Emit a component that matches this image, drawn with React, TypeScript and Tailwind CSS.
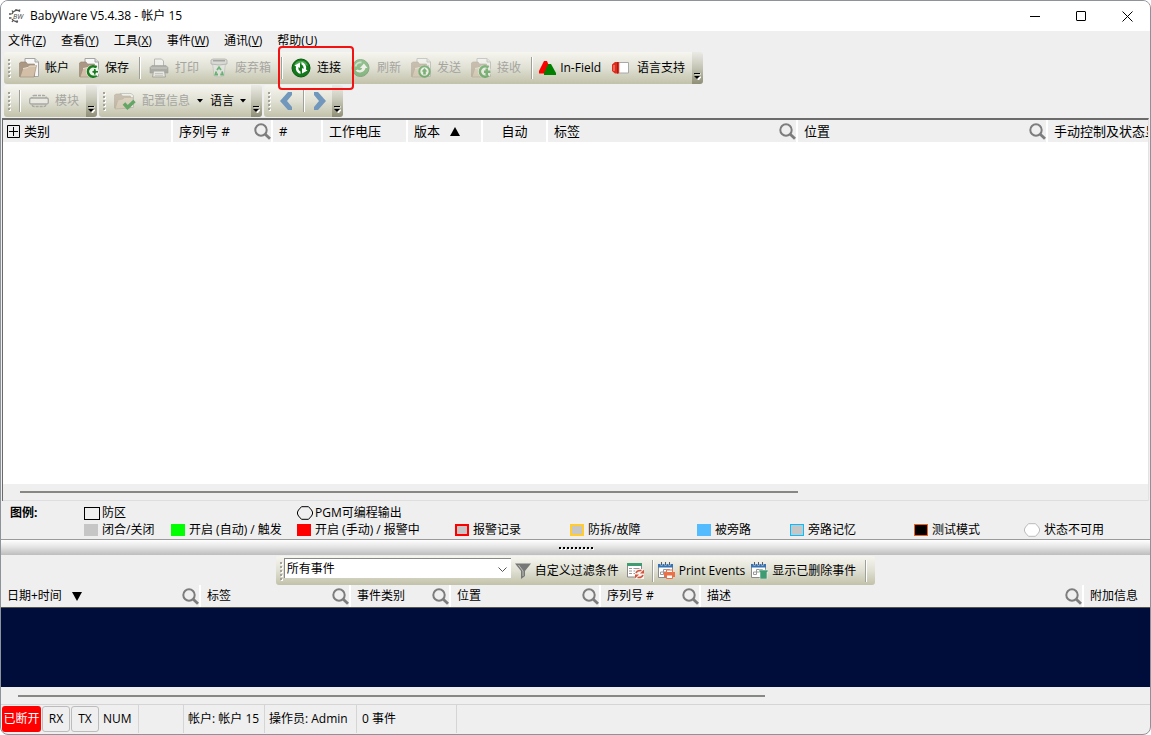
import type { ReactNode } from "react"

const BAR = "flex items-stretch rounded-l-[3px] bg-linear-to-b from-[#f6f6f0] via-[#e0e0d4] to-[#c2c2aa]"

/* ---------- icons ---------- */

const Folder = ({ children, faded }: { children?: ReactNode; faded?: boolean }) => (
  <svg width="20" height="20" viewBox="0 0 20 20" className={faded ? "opacity-50" : ""}>
    <path d="M6 .5h10l3.500 3.500v14.500H6z" fill="#f7f7f7" stroke="#a5a5a5" />
    <path d="M16 .5V4h3.500" fill="#ddd" stroke="#a5a5a5" />
    <path d="M.5 18.500V5l1.500-1h5l1.500 2h7v12.500z" fill="#ab9884" stroke="#94826f" strokeWidth=".6" />
    <path d="M1 19l3-9 5-1 1.500-1.500h7L15 19z" fill="#d3bfa8" stroke="#9c8974" strokeWidth=".6" />
    <path d="M4 10.500l5-1 1.500-1.500H17" fill="none" stroke="#eadfd0" />
    {children}
  </svg>
)

const SaveIcon = () => (
  <Folder>
    <circle cx="13.500" cy="13.500" r="6.500" fill="#eef2ea" />
    <path d="M17.500 9.500a5.200 5.200 0 1 0 0 8" fill="none" stroke="#1a7d1f" strokeWidth="2.600" />
    <path d="M14.500 10.500h2.500v2h2.500v2.500H17v2h-2.500v-2h-1.500v-2.500h1.500z" fill="#1a7d1f" stroke="#fff" strokeWidth=".8" />
  </Folder>
)

const SendIcon = () => (
  <Folder faded>
    <circle cx="13.500" cy="13.500" r="5.200" fill="#fff" stroke="#1f8a25" strokeWidth="2" />
    <path d="M13.500 10l2.800 3.500h-1.500v3h-2.600v-3h-1.500z" fill="#1f8a25" />
  </Folder>
)

const ReceiveIcon = () => (
  <Folder faded>
    <circle cx="13.500" cy="13.500" r="6.500" fill="#f6f6f2" />
    <path d="M17.500 9.500a5.200 5.200 0 1 0 0 8" fill="none" stroke="#1f8a25" strokeWidth="2.600" />
    <path d="M14.500 10.500h2.500v2h2.500v2.500H17v2h-2.500v-2h-1.500v-2.500h1.500z" fill="#1f8a25" />
  </Folder>
)

const ConfigIcon = () => (
  <svg width="22" height="20" viewBox="0 0 22 20">
    <g opacity=".5">
      <path d="M6 2.500h11l2.500 2v12H6z" fill="#f7f7f7" stroke="#a5a5a5" />
      <path d="M.5 17V4l1.500-1h5l1.500 2h8v12z" fill="#ab9884" stroke="#94826f" strokeWidth=".6" />
      <path d="M1 18l3-9 5-1 1.500-1.500h9L16 17z" fill="#d3bfa8" stroke="#9c8974" strokeWidth=".6" />
    </g>
    <path d="M10 12.500l3.500 4 7-6.500" fill="none" stroke="#63a666" strokeWidth="3.500" />
  </svg>
)

const PrinterIcon = () => (
  <svg width="20" height="20" viewBox="0 0 20 20" className="opacity-60">
    <path d="M5.500 9V1h7l2 2v6" fill="#f5f5f5" stroke="#999" />
    <path d="M1 9.500l2-2h14l2 2V15H1z" fill="#8c8c8c" stroke="#777" strokeWidth=".6" />
    <path d="M2 10h16" stroke="#c5c5c5" />
    <path d="M4.500 13h11l1 6h-13z" fill="#f2f2f2" stroke="#8c8c8c" />
    <path d="M6 15.500h8M6 17.300h8" stroke="#bbb" />
  </svg>
)

const BinIcon = () => (
  <svg width="20" height="20" viewBox="0 0 20 20" className="opacity-60">
    <path d="M3.500 5h13l-1.500 13q-5 2-10 0z" fill="#e4e4e4" stroke="#bdbdbd" />
    <path d="M2 2l2-1h12l2 1v4q-8 2-16 0z" fill="#d0d0d0" stroke="#8c8c8c" strokeWidth=".8" />
    <path d="M4 2.700h12" stroke="#777" strokeWidth="1.500" />
    <path d="M8 12l2-2.800 2 2.800M13 13.500l.8 3h-2.500M9 16.500H6.400l.9-3" fill="none" stroke="#1f9a3d" strokeWidth="1.800" />
  </svg>
)

const ConnectIcon = () => (
  <svg width="20" height="20" viewBox="0 0 20 20">
    <circle cx="10" cy="10" r="9" fill="#12791a" stroke="#0c5912" />
    <path d="M3 8a7.300 7.300 0 0 1 14 0Q10 3 3 8z" fill="#49a64c" />
    <path d="M9.500 16A6 6 0 0 1 5 8.500L3.500 7.500 9 4.500v5.500L7.500 9q-.6 3 2 4.500z" fill="#fff" />
    <path d="M10.500 4a6 6 0 0 1 4.500 7.500l1.500 1-5.500 3V10l1.500 1q.6-3-2-4.500z" fill="#fff" />
  </svg>
)

const RefreshIcon = () => (
  <svg width="20" height="20" viewBox="0 0 20 20" className="opacity-50">
    <circle cx="9.500" cy="10" r="8.500" fill="#3d9b42" stroke="#35783a" />
    <path d="M4.500 12.500a5.800 5.800 0 0 0 10-2.500h2l-3.600-4.500L9 10h2.200a2.700 2.700 0 0 1-4.400 1.500z" fill="#fff" />
    <path d="M4.500 8.500a5.300 5.300 0 0 1 6-4" fill="none" stroke="#bfe0c0" strokeWidth="1.800" />
  </svg>
)

const InFieldIcon = () => (
  <svg width="17" height="14" viewBox="0 0 17 14">
    <path d="M5 0h3l2 5-3 7.500H0V10z" fill="#f00" />
    <path d="M9 3h3l5 9v2H5v-2z" fill="#007f00" />
  </svg>
)

const LanguageIcon = () => (
  <svg width="20" height="14" viewBox="0 0 20 14">
    <path d="M8 1.500h9.500v10.500H8z" fill="#fff" stroke="#a8a8a8" />
    <path d="M8 1v11.500H4L1 10V3.500L4 1z" fill="#dd2b1c" />
    <path d="M3 4v6" stroke="#f0a090" />
    <path d="M6.500 1v11.500" stroke="#b3150c" />
  </svg>
)

const ModuleIcon = () => (
  <svg width="20" height="20" viewBox="0 0 20 20" fill="none" stroke="#a8a8a4" strokeWidth="1.300">
    <rect x="3" y="4.500" width="14" height="11" rx="2" strokeDasharray="3 1" />
    <rect x=".7" y="7" width="18.600" height="6" rx="1.500" fill="#e8e8e0" />
  </svg>
)

const Chevron = ({ right }: { right?: boolean }) => (
  <svg width="12" height="20" viewBox="0 0 12 20">
    <path d={right ? "M0 1h4l8 9-8 9H0V16l5-6-5-6z" : "M12 1H8L0 10l8 9h4V16l-5-6 5-6z"} fill="#7297bd" />
  </svg>
)

const SearchIcon = () => (
  <svg width="17" height="17" viewBox="0 0 17 17" fill="none" stroke="#7d7d7d">
    <circle cx="7" cy="7" r="5.700" strokeWidth="2" />
    <path d="M11 11l5 4.800" strokeWidth="2.800" />
  </svg>
)

const FilterIcon = () => (
  <svg width="16" height="16" viewBox="0 0 16 16">
    <path d="M0 .5h16L10 8v5l-4 3V8z" fill="#777" />
    <path d="M3.500 2L8 8v5" fill="none" stroke="#c2c2bb" />
  </svg>
)

const ListIcon = () => (
  <svg width="17" height="17" viewBox="0 0 17 17">
    <path d="M.5 2h14v13H.5z" fill="#fff" stroke="#8a8a8a" />
    <path d="M0 1h15v3H0z" fill="#3f9b72" />
    <path d="M2 6.500h3M2 9h3M2 11.500h3M6.500 6.500h6M6.500 9H8M6.500 11.500H8" stroke="#999" />
    <path d="M8 7h9v10H8z" fill="#f4f4f0" />
    <path d="M9 11q1-3 5.500-2.500M16 13q-1 3-5.500 2.500" fill="none" stroke="#d6523c" strokeWidth="1.500" />
    <path d="M13 11.500h4v-4zM12 12.500H8v4z" fill="#d6523c" />
  </svg>
)

const CalendarIcon = ({ bin }: { bin?: boolean }) => (
  <svg width="17" height="17" viewBox="0 0 17 17">
    <path d="M.5 3h14v12.500H.5z" fill="#fff" stroke="#8a8a8a" />
    <path d="M0 2h15v3.500H0z" fill="#3673b4" />
    <path d="M3.500 0v3.500M7.500 0v3.500M11.500 0v3.500" stroke="#dfe6ee" strokeWidth="2" />
    <path d="M3.500 0v3M7.500 0v3M11.500 0v3" stroke="#5a5a5a" />
    <path d="M2.500 12.500V10h3V7.500h3V10h-3v2.500zM8.500 7.500h3V10h-3" fill="none" stroke="#999" />
    {bin ? (
      <path d="M8 8h9v2h-1v7H9v-7H8z" fill="#3f9b72" stroke="#fff" strokeWidth=".5" />
    ) : (
      <g>
        <path d="M6 10h11v5H6z" fill="#e8714a" />
        <path d="M8.500 8h6v2.500h-6zM8.500 13h6v3.500h-6z" fill="#fff" stroke="#e8714a" />
      </g>
    )}
  </svg>
)

/* ---------- toolbar parts ---------- */

const Grip = ({ narrow }: { narrow?: boolean }) => (
  <span className={`flex shrink-0 flex-col justify-center gap-[2px] pl-1 ${narrow ? "w-2" : "w-[10px]"}`}>
    {[0, 1, 2, 3, 4].map((i) => (
      <span key={i} className="h-[2px] w-[2px] bg-[#a3a39a] shadow-[1px_1px_0_#fff]" />
    ))}
  </span>
)

const Sep = () => (
  <span className="flex w-[10px] shrink-0 items-center justify-center">
    <span className="h-[22px] w-px bg-[#a0a09a] shadow-[1px_0_0_#fff]" />
  </span>
)

const Caret = () => (
  <svg width="6" height="4" viewBox="0 0 6 4">
    <path d="M0 0h6L3 3.500z" fill="#000" />
  </svg>
)

const ToolButton = ({ icon, label, disabled, caret }: { icon?: ReactNode; label: string; disabled?: boolean; caret?: boolean }) => (
  <button disabled={disabled} className="flex items-center gap-[6px] px-[5px] whitespace-nowrap disabled:text-[#a5a5a0]">
    {icon}
    {label}
    {caret && <Caret />}
  </button>
)

const Overflow = () => (
  <button aria-label="更多" className="flex w-[11px] items-end justify-center rounded-r-[3px] bg-linear-to-b from-[#ebebe6] via-[#c4c4b4] to-[#8f8f76] pb-1">
    <svg width="7" height="7" viewBox="0 0 7 7">
      <path d="M1 1h6M2 4h5L4.500 7z" stroke="#fff" fill="#fff" />
      <path d="M0 .5h6" stroke="#000" />
      <path d="M0 3h6L3 6z" fill="#000" />
    </svg>
  </button>
)

const menus = [
  ["文件", "Z"],
  ["查看", "Y"],
  ["工具", "X"],
  ["事件", "W"],
  ["通讯", "V"],
  ["帮助", "U"],
]

const TitleBar = () => (
  <header className="flex h-[30px] items-stretch bg-white">
    <div className="flex flex-1 items-center gap-1 pl-2">
      <svg width="17" height="14" viewBox="0 0 17 14">
        <path d="M11 2.500A5 5 0 0 0 3 5M3 10a5 5 0 0 0 6 2" fill="none" stroke="#555" strokeWidth="1.400" />
        <path d="M7 0v2M3 1.500l1 1.500M0 5h2.500M0 9h2.500M3 13l1-1.500M8 14v-2M11 .5L10 2" stroke="#555" strokeWidth="1.300" />
        <text x="4" y="10" fontSize="7" fontStyle="italic" fill="#444">BW</text>
      </svg>
      <h1>BabyWare V5.4.38 - 帐户 15</h1>
    </div>
    <button aria-label="最小化" className="flex w-[46px] items-center justify-center">
      <span className="h-px w-[10px] bg-black" />
    </button>
    <button aria-label="最大化" className="flex w-[46px] items-center justify-center">
      <span className="h-[10px] w-[10px] rounded-[1px] border border-black" />
    </button>
    <button aria-label="关闭" className="flex w-[46px] items-center justify-center">
      <svg width="11" height="11" viewBox="0 0 11 11">
        <path d="M.5.5l10 10M10.500.5l-10 10" stroke="#000" />
      </svg>
    </button>
  </header>
)

const Toolbars = () => (
  <div className="flex flex-col gap-px pt-px pb-px pl-[3px]">
    <div className="flex h-[32px]">
      <div className={`${BAR} pr-[2px]`}>
        <Grip />
        <ToolButton icon={<Folder />} label="帐户" />
        <ToolButton icon={<SaveIcon />} label="保存" />
        <Sep />
        <ToolButton disabled icon={<PrinterIcon />} label="打印" />
        <ToolButton disabled icon={<BinIcon />} label="废弃箱" />
        <Sep />
        <div className="relative flex">
          <ToolButton icon={<ConnectIcon />} label="连接" />
          <span className="pointer-events-none absolute -inset-x-2 -inset-y-[6px] z-10 rounded-[4px] border-2 border-[#f31212]" />
        </div>
        <ToolButton disabled icon={<RefreshIcon />} label="刷新" />
        <ToolButton disabled icon={<SendIcon />} label="发送" />
        <ToolButton disabled icon={<ReceiveIcon />} label="接收" />
        <Sep />
        <button className="flex items-center gap-1 pr-[5px] pl-[3px]">
          <InFieldIcon />
          In-Field
        </button>
        <ToolButton icon={<LanguageIcon />} label="语言支持" />
      </div>
      <Overflow />
    </div>
    <div className="flex h-[32px] gap-[2px]">
      <div className="flex">
        <div className={`${BAR} pr-[2px]`}>
          <Grip />
          <Sep />
          <ToolButton disabled icon={<ModuleIcon />} label="模块" />
        </div>
        <Overflow />
      </div>
      <div className="flex">
        <div className={BAR}>
          <Grip />
          <ToolButton disabled icon={<ConfigIcon />} label="配置信息" />
          <button aria-label="配置信息选项" className="px-[2px]">
            <Caret />
          </button>
          <ToolButton label="语言" caret />
        </div>
        <Overflow />
      </div>
      <div className="flex">
        <div className={BAR}>
          <Grip />
          <button aria-label="后退" className="px-[6px]">
            <Chevron />
          </button>
          <Sep />
          <button aria-label="前进" className="px-[6px]">
            <Chevron right />
          </button>
        </div>
        <Overflow />
      </div>
    </div>
  </div>
)

/* ---------- tables ---------- */

type Col = { label: string; width: string; search?: boolean; sort?: "up" | "down"; expand?: boolean; center?: boolean }

const zoneCols: Col[] = [
  { label: "类别", width: "w-[170px]", expand: true },
  { label: "序列号 #", width: "w-[100px]", search: true },
  { label: "#", width: "w-[50px]" },
  { label: "工作电压", width: "w-[85px]" },
  { label: "版本", width: "w-[75px]", sort: "up" },
  { label: "自动", width: "w-[65px]", center: true },
  { label: "标签", width: "w-[250px]", search: true },
  { label: "位置", width: "w-[250px]", search: true },
  { label: "手动控制及状态显示", width: "" },
]

const eventCols: Col[] = [
  { label: "日期+时间", width: "w-[200px]", search: true, sort: "down" },
  { label: "标签", width: "w-[150px]", search: true },
  { label: "事件类别", width: "w-[100px]", search: true },
  { label: "位置", width: "w-[150px]", search: true },
  { label: "序列号 #", width: "w-[100px]", search: true },
  { label: "描述", width: "w-[383px]", search: true },
  { label: "附加信息", width: "" },
]

const HeaderTable = ({ cols, label }: { cols: Col[]; label: string }) => (
  <table aria-label={label} className="w-full table-fixed border-separate border-spacing-0 bg-[#efefef]">
    <thead>
      <tr>
        {cols.map((c) => (
          <th key={c.label} className={`${c.width} h-[22px] overflow-hidden border-r-2 border-white p-0 font-normal last:border-r-0`}>
            <div className={`flex items-center whitespace-nowrap ${c.center ? "justify-center" : c.expand ? "pl-1" : "pl-[6px]"}`}>
              {c.expand && (
                <button aria-label="展开" className="mr-1">
                  <svg width="13" height="13" viewBox="0 0 13 13">
                    <path d="M.5.5h12v12H.5zM2 6.500h9M6.500 2v9" fill="none" stroke="#000" />
                  </svg>
                </button>
              )}
              {c.label}
              {c.sort && (
                <svg width="10" height="9" viewBox="0 0 10 9" className="ml-[10px]">
                  <path d={c.sort === "up" ? "M0 9L5 0l5 9z" : "M0 0h10L5 9z"} fill="#000" />
                </svg>
              )}
              {c.search && (
                <button aria-label={`搜索${c.label}`} className="ml-auto">
                  <SearchIcon />
                </button>
              )}
            </div>
          </th>
        ))}
      </tr>
    </thead>
  </table>
)

/* ---------- legend ---------- */

const Hex = ({ stroke, fill }: { stroke: string; fill: string }) => (
  <svg width="16" height="14" viewBox="0 0 16 14">
    <path d="M4.500.7h7l3 3.300 1 2v2l-1 2-3 3.300h-7l-3-3.300-1-2V6l1-2z" stroke={stroke} fill={fill} />
  </svg>
)

const legend = [
  { label: "闭合/关闭", box: "bg-[#c6c6c6]" },
  { label: "开启 (自动) / 触发", box: "bg-[#00ff00]" },
  { label: "开启 (手动) / 报警中", box: "bg-[#ff0000]" },
  { label: "报警记录", box: "bg-[#c6c6c6] border-2 border-[#ff0000]" },
  { label: "防拆/故障", box: "bg-[#c6c6c6] border-2 border-[#ffcc33]" },
  { label: "被旁路", box: "bg-[#55bbff]" },
  { label: "旁路记忆", box: "bg-[#c6c6c6] border border-[#00c0ff]" },
  { label: "测试模式", box: "bg-black border border-[#f26012]" },
]

const Legend = () => (
  <section className="grid grid-cols-[74fr_87fr_126fr_158fr_115fr_127fr_93fr_124fr_110fr_126fr] content-start gap-y-px border-b border-[#9a9a9a] pt-1 pb-px pl-[9px] leading-4 whitespace-nowrap">
    <strong>图例:</strong>
    <span className="flex items-center gap-[2px]">
      <span className="h-[13px] w-4 border border-black" />
      防区
    </span>
    <span />
    <span className="col-span-7 flex items-center gap-[2px]">
      <Hex stroke="#000" fill="none" />
      PGM可编程输出
    </span>
    <span />
    {legend.map((l) => (
      <span key={l.label} className="flex items-center gap-1">
        <span className={`h-3 w-[14px] shrink-0 ${l.box}`} />
        {l.label}
      </span>
    ))}
    <span className="flex items-center gap-1">
      <Hex stroke="#bbb" fill="#fff" />
      状态不可用
    </span>
  </section>
)

const EventBar = () => (
  <div className="flex h-[30px] justify-center pt-px">
    <div className={`${BAR} rounded-r-[3px] pr-[5px]`}>
      <Grip narrow />
      <div className="relative mt-[2px] mb-[7px] flex w-[227px]">
        <select aria-label="事件过滤" className="w-full appearance-none border-t border-l border-[#888] bg-white pl-[2px]">
          <option>所有事件</option>
        </select>
        <svg width="9" height="5" viewBox="0 0 9 5" className="pointer-events-none absolute top-[9px] right-1">
          <path d="M.5.5l4 4 4-4" fill="none" stroke="#555" />
        </svg>
      </div>
      <button className="flex items-center gap-1 pr-2 pl-1">
        <FilterIcon />
        自定义过滤条件
      </button>
      <button aria-label="刷新列表" className="pr-1">
        <ListIcon />
      </button>
      <Sep />
      <button className="flex items-center gap-1 pr-[6px]">
        <CalendarIcon />
        Print Events
      </button>
      <button className="flex items-center gap-1 pr-1">
        <CalendarIcon bin />
        显示已删除事件
      </button>
      <Sep />
    </div>
  </div>
)

const StatusBar = () => (
  <footer className="flex h-[29px] border-t border-[#d5d5d5] whitespace-nowrap *:flex *:items-center">
    <span className="my-px ml-px w-[39px] justify-center rounded-[3px] bg-[#ff0000] text-white">已断开</span>
    <span className="my-px ml-px w-[28px] justify-center rounded-[3px] border border-[#bcbcbc]">RX</span>
    <span className="my-px ml-px w-[28px] justify-center rounded-[3px] border border-[#bcbcbc]">TX</span>
    <span className="w-[40px] border-r border-[#d5d5d5] pl-1">NUM</span>
    <span className="w-[45px] border-r border-[#d5d5d5]" />
    <span className="w-[81px] border-r border-[#d5d5d5] pl-1">帐户: 帐户 15</span>
    <span className="w-[92px] border-r border-[#d5d5d5] pl-1">操作员: Admin</span>
    <span className="w-[100px] border-r border-[#d5d5d5] pl-[5px]">0 事件</span>
  </footer>
)

const App = () => {
  return (
    <div className="flex min-h-screen flex-col overflow-hidden rounded-lg border border-[#8e9299] bg-[#efefef] pb-px font-['Open_Sans','Noto_Sans_CJK_SC',sans-serif] text-[12px] leading-4 text-black">
      <TitleBar />
      <nav className="flex h-5 items-center gap-px">
        {menus.map(([name, key]) => (
          <button key={key} className="px-[7px]">
            {name}(<u>{key}</u>)
          </button>
        ))}
      </nav>
      <Toolbars />

      <main className="mr-px ml-px flex flex-1 flex-col border-t-2 border-r border-l border-t-[#6b6b6b] border-r-[#e3e3e3] border-l-[#6b6b6b] bg-white text-[13px]">
        <HeaderTable cols={zoneCols} label="模块" />
        <div className="flex-1" />
        <div className="h-[17px] border-b border-[#dedede] bg-[#efefef] pt-[7px] pl-[17px]">
          <div className="h-[2px] w-[69%] bg-[#858883]" />
        </div>
      </main>

      <Legend />
      <div className="flex h-[15px] items-center justify-center gap-[2px] bg-linear-to-b from-white via-[#e2e2e2] to-[#bdbdbd]">
        {[0, 1, 2, 3, 4, 5, 6, 7, 8].map((i) => (
          <span key={i} className="h-[2px] w-[2px] bg-black shadow-[1px_1px_0_#fff]" />
        ))}
      </div>

      <EventBar />
      <HeaderTable cols={eventCols} label="事件" />
      <div className="h-[80px] border-t border-[#55564e] bg-[#000c3a]" />
      <div className="h-[17px] pt-2 pl-[17px]">
        <div className="h-[2px] w-[66%] bg-[#858883]" />
      </div>
      <StatusBar />
    </div>
  )
}

export default App
